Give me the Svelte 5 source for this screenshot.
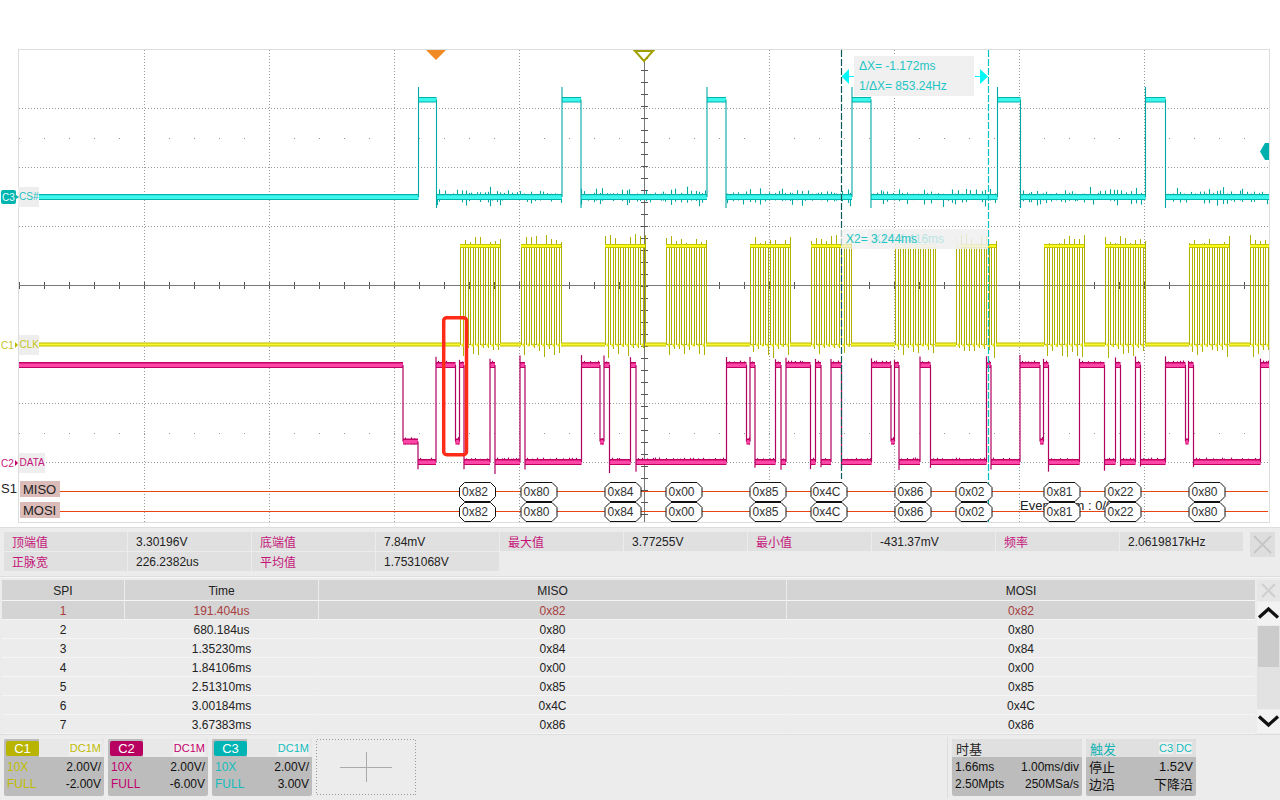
<script>
// seeded random so the noise is the same on every load
let seed = 17
function rnd() {
    seed = (seed * 16807) % 2147483647
    return seed / 2147483647
}

const LEFT = 19
const RIGHT = 1269

const vGrid = [144, 269, 394, 519, 769, 894, 1019, 1144]
const hGrid = [108, 167, 226, 344, 403, 462]
const xTicks = []
for (let x = 19; x < RIGHT; x += 25) xTicks.push(x)
const yTicks = []
for (let y = 58; y < 522; y += 12) yTicks.push(y)

// CS# channel, [rise, fall]
const csPulses = [[418.5, 436.5], [562, 581], [707, 726], [852, 871], [997.5, 1020.5], [1145.5, 1165.5]]
const CS_HI = 99.5
const CS_LO = 197

const csLow = []
const csHigh = []
const csEdges = []
const csNoise = []
let prev = LEFT
for (const [r, f] of csPulses) {
    csLow.push([prev, r])
    csHigh.push([r, f])
    csEdges.push([r, 87, CS_LO], [f, CS_HI, 208])
    prev = f
}
csLow.push([prev, RIGHT])
for (let x = 437; x < RIGHT; x += 2 + rnd() * 4) {
    if (csPulses.some(([r, f]) => x > r && x < f)) continue
    const a = 1 + rnd() * rnd() * 8
    csNoise.push([Math.round(x) + 0.5, CS_LO - 2 - a, CS_LO + 2 + rnd() * rnd() * 9])
}

// CLK channel, start of each 8 clock burst
const bursts = [460, 521, 605, 666, 750, 811, 895, 956, 1044, 1105, 1189, 1250]
const CLK_HI = 246
const CLK_LO = 344.5
const clkLines = []
const clkBits = []
for (const b of bursts) {
    for (let j = 0; j <= 16; j++) {
        const x = Math.round(b + j * 2.5) + 0.5
        const rising = j % 2 == 0
        clkLines.push([x, rising ? 234 + rnd() * 11 : CLK_HI, rising ? CLK_LO : 346 + rnd() * 12])
        if (!rising) clkBits.push(x)
    }
}
const clkLow = []
prev = LEFT
for (const b of bursts) {
    clkLow.push([prev, b])
    prev = b + 40
}

// DATA channel, [x, level it moves to]
const levels = { h: 365, m: 441.5, l: 462 }
const dataEdges = [
    [403, 'm'], [418, 'l'], [436, 'h'], [455.5, 'm'], [459.5, 'h'], [464, 'l'], [490, 'h'], [495, 'l'],
    [520, 'h'], [525, 'l'], [581.5, 'h'], [600, 'm'], [604, 'h'], [609.5, 'l'], [630.5, 'h'], [636, 'l'],
    [726.5, 'h'], [746.5, 'm'], [750, 'h'], [755, 'l'], [775.5, 'h'], [781, 'l'], [786, 'h'], [810.5, 'l'],
    [815.5, 'h'], [821, 'l'], [831, 'h'], [841.5, 'l'], [871.5, 'h'], [891, 'm'], [894.5, 'h'], [899, 'l'],
    [920, 'h'], [930.5, 'l'], [986.5, 'h'], [991, 'l'], [1020, 'h'], [1040, 'm'], [1043.5, 'h'], [1048.5, 'l'],
    [1079.5, 'h'], [1104.5, 'l'], [1115.5, 'h'], [1120.5, 'l'], [1135.5, 'h'], [1140.5, 'l'], [1165.5, 'h'],
    [1185.5, 'm'], [1188.5, 'h'], [1193.5, 'l'], [1260.5, 'h']
]
const dataSegs = []
const dataLines = []
const dataNoise = []
let lvl = 'h'
prev = LEFT
for (const [x, to] of dataEdges) {
    dataSegs.push([prev, x, levels[lvl]])
    const up = levels[to] < levels[lvl]
    let top = Math.min(levels[to], levels[lvl])
    let bottom = Math.max(levels[to], levels[lvl])
    if (up) top -= 4 + rnd() * 6
    else if (to == 'l') bottom += 4 + rnd() * 9
    dataLines.push([x, top, bottom])
    prev = x
    lvl = to
}
dataSegs.push([prev, RIGHT, levels[lvl]])
for (const [a, b, y] of dataSegs) {
    if (a < 403) continue
    for (let x = a + 2; x < b - 1; x += 2 + rnd() * 5) {
        dataNoise.push([Math.round(x) + 0.5, y - 3 - rnd() * 1.5, y + 3])
    }
}

// decoded SPI bytes
const frames = [
    [459.5, '0x82'], [521, '0x80'], [605, '0x84'], [666, '0x00'], [750, '0x85'], [811, '0x4C'],
    [895, '0x86'], [956, '0x02'], [1044, '0x81'], [1105, '0x22'], [1189, '0x80']
]
function pill(x, y) {
    const w = 36, h = 19, c = 5
    return `${x + c},${y} ${x + w - c},${y} ${x + w},${y + c} ${x + w},${y + h - c} ${x + w - c},${y + h} ${x + c},${y + h} ${x},${y + h - c} ${x},${y + c}`
}

const measures = [
    ['顶端值', '3.30196V'], ['底端值', '7.84mV'], ['最大值', '3.77255V'], ['最小值', '-431.37mV'], ['频率', '2.0619817kHz'],
    ['正脉宽', '226.2382us'], ['平均值', '1.7531068V']
]

const rows = [
    ['1', '191.404us', '0x82'],
    ['2', '680.184us', '0x80'],
    ['3', '1.35230ms', '0x84'],
    ['4', '1.84106ms', '0x00'],
    ['5', '2.51310ms', '0x85'],
    ['6', '3.00184ms', '0x4C'],
    ['7', '3.67383ms', '0x86']
]

const channels = [
    { name: 'C1', cls: 'c1', offset: '-2.00V' },
    { name: 'C2', cls: 'c2', offset: '-6.00V' },
    { name: 'C3', cls: 'c3', offset: '3.00V' }
]
</script>

<div class="page">
    <svg class="scope" width="1280" height="527" viewBox="0 0 1280 527">
        <defs>
            <clipPath id="area"><rect x="19" y="50" width="1250" height="472" /></clipPath>
        </defs>
        <rect x="18.5" y="49.5" width="1251" height="473" fill="#fff" stroke="#ddd" />

        <g class="crisp">
            {#each vGrid as x}
                <line class="dot" x1={x + 0.5} x2={x + 0.5} y1="50" y2="522" />
            {/each}
            {#each hGrid as y}
                <line class="dot" x1="19" x2="1269" y1={y + 0.5} y2={y + 0.5} />
            {/each}
            {#each xTicks as x}
                <rect x={x} y="138" width="1" height="1" fill="#999" />
                <rect x={x} y="433" width="1" height="1" fill="#999" />
                <line class="tick" x1={x + 0.5} x2={x + 0.5} y1="282" y2="289" />
            {/each}
            <line class="axis" x1="19" x2="1269" y1="285.5" y2="285.5" />
            <line class="axis" x1="644.5" x2="644.5" y1="50" y2="522" />
            {#each yTicks as y}
                <line class="tick" x1="641" x2="648" y1={y + 0.5} y2={y + 0.5} />
            {/each}
        </g>

        <g clip-path="url(#area)">
            <!-- CLK -->
            {#each clkLines as [x, a, b]}
                <line class="clk" x1={x} x2={x} y1={a} y2={b} />
            {/each}
            {#each bursts as b}
                <rect x={b} y={CLK_HI - 2} width="40" height="4" fill="#c4c400" />
                <rect x={b} y={CLK_HI - 1} width="40" height="2" fill="#fbfb1e" />
            {/each}
            {#each clkBits as x}
                <rect x={x - 2} y={CLK_LO - 1} width="2" height="3" fill="#e8e810" />
            {/each}
            {#each clkLow as [a, b]}
                <rect x={a} y={CLK_LO - 2} width={b - a} height="4" fill="#bcbc00" />
                <rect x={a} y={CLK_LO - 1} width={b - a} height="2" fill="#f8f830" />
            {/each}

            <!-- DATA -->
            {#each dataNoise as [x, a, b]}
                <line class="data" x1={x} x2={x} y1={a} y2={b} />
            {/each}
            {#each dataSegs as [a, b, y]}
                <rect x={a} y={y - 3} width={b - a} height="6" fill="#c00062" />
                <rect x={a} y={y - 1.5} width={b - a} height="3.5" fill="#ff47a8" />
            {/each}
            {#each dataLines as [x, a, b]}
                <line class="data" x1={x} x2={x} y1={a} y2={b} />
            {/each}

            <!-- CS# -->
            {#each csNoise as [x, a, b]}
                <line class="cs" x1={x} x2={x} y1={a} y2={b} />
            {/each}
            {#each csLow as [a, b]}
                <rect x={a} y={CS_LO - 3} width={b - a} height="6" fill="#00b2ae" />
                <rect x={a} y={CS_LO - 1.8} width={b - a} height="3.8" fill="#3cf8ec" />
            {/each}
            {#each csHigh as [a, b]}
                <rect x={a} y={CS_HI - 2.5} width={b - a} height="5.5" fill="#00b2ae" />
                <rect x={a} y={CS_HI - 1.5} width={b - a} height="3.5" fill="#3cf8ec" />
            {/each}
            {#each csEdges as [x, a, b]}
                <line class="cs" x1={x} x2={x} y1={a} y2={b} />
            {/each}

            <!-- cursors -->
            <line class="cursor one" x1="841.5" x2="841.5" y1="50" y2="479" />
            <line class="cursor two" x1="988.5" x2="988.5" y1="50" y2="522" />
        </g>

        <!-- measurement boxes -->
        <rect x="854" y="56" width="120" height="40" fill="#f0f0f0" />
        <text class="cur" x="859" y="70">ΔX= -1.172ms</text>
        <text class="cur" x="859" y="90">1/ΔX= 853.24Hz</text>
        <polygon points="841.5,76.5 849,69 849,76 854,76 854,77 849,77 849,84" fill="#00f8f8" />
        <polygon points="988,76.5 980,69 980,76 975,76 975,77 980,77 980,84" fill="#00f8f8" />

        <rect x="868" y="229" width="120" height="20" fill="#f0f0f0" fill-opacity="0.85" />
        <text class="cur" x="873" y="243">X1= 4.416ms</text>
        <rect x="841" y="229" width="120" height="20" fill="#f0f0f0" fill-opacity="0.72" />
        <text class="cur" x="846" y="243">X2= 3.244ms</text>

        <!-- triggers -->
        <polygon points="426,50 446,50 436,60" fill="#f08a24" />
        <polygon points="635,51 653,51 644,61" fill="#fff" stroke="#a0a000" stroke-width="2" />
        <polygon points="1260,151.5 1265,143 1269,143 1269,160 1265,160" fill="#00b0ac" />

        <!-- channel labels -->
        <rect x="18" y="187" width="21" height="20" fill="#eee" />
        <text class="small cs-text" x="19" y="200">CS#</text>
        <rect x="1" y="190" width="15" height="14" rx="2" fill="#00b4b0" />
        <polygon points="16,195 19,197 16,199" fill="#00b4b0" />
        <text class="small badge" x="8.5" y="201">C3</text>

        <rect x="19" y="335" width="20" height="20" fill="#eee" />
        <text class="small clk-text" x="19.5" y="348">CLK</text>
        <text class="small clk-text" x="1" y="349">C1</text>
        <polygon points="15,342 18,345 15,348" fill="#b8b800" />

        <rect x="19" y="453" width="26" height="20" fill="#eee" />
        <text class="small data-text" x="19.5" y="466">DATA</text>
        <text class="small data-text" x="1" y="467">C2</text>
        <polygon points="15,460 18,463 15,466" fill="#c00062" />

        <text class="bus" x="1" y="493">S1</text>
        <line class="busline" x1="60" x2="1268" y1="491.5" y2="491.5" />
        <line class="busline" x1="60" x2="1268" y1="511.5" y2="511.5" />
        <rect x="20" y="481" width="40" height="16" fill="#dcbcb8" />
        <rect x="20" y="502" width="40" height="16" fill="#dcbcb8" />
        <text class="bus" x="23" y="494">MISO</text>
        <text class="bus" x="23" y="515">MOSI</text>

        <text class="bus" x="1020" y="510">Event Num : 0/0</text>

        {#each frames as [x, label]}
            <polygon class="pill" points={pill(x, 482.5)} />
            <text class="hex" x={x + 15.5} y="496">{label}</text>
            <polygon class="pill" points={pill(x, 502.5)} />
            <text class="hex" x={x + 15.5} y="516">{label}</text>
        {/each}

        <rect x="443.7" y="317.7" width="22.8" height="137" rx="3" fill="none" stroke="#ff2a18" stroke-width="3.5" />
    </svg>

    <div class="measures">
        <div class="meas-grid">
            {#each measures as [label, value]}
                <div class="meas-label">{label}</div>
                <div class="meas-value">{value}</div>
            {/each}
        </div>
        <div class="close big">
            <svg width="25" height="25" viewBox="0 0 25 25"><path d="M4 4 L21 21 M21 4 L4 21" stroke="#c6c6c6" stroke-width="2" /></svg>
        </div>
    </div>

    <div class="decode">
        <div class="table">
            <div class="row head">
                <div>SPI</div><div>Time</div><div>MISO</div><div>MOSI</div>
            </div>
            {#each rows as [n, time, byte], i}
                <div class="row" class:selected={i == 0}>
                    <div>{n}</div><div>{time}</div><div>{byte}</div><div>{byte}</div>
                </div>
            {/each}
        </div>
        <div class="scroll">
            <div class="close small-x">
                <svg width="23" height="21" viewBox="0 0 23 21"><path d="M5 4 L18 17 M18 4 L5 17" stroke="#cfcfcf" stroke-width="2" /></svg>
            </div>
            <div class="arrow">
                <svg width="23" height="23" viewBox="0 0 23 23"><path d="M2 15.5 L11.5 7 L21 15.5" fill="none" stroke="#111" stroke-width="3.2" /></svg>
            </div>
            <div class="track"><div class="thumb"></div></div>
            <div class="arrow">
                <svg width="23" height="23" viewBox="0 0 23 23"><path d="M2 6.5 L11.5 15 L21 6.5" fill="none" stroke="#111" stroke-width="3.2" /></svg>
            </div>
        </div>
    </div>

    <div class="bottom">
        {#each channels as ch}
            <div class="chan {ch.cls}">
                <div class="chan-head">
                    <div class="chan-tab"><span class="chan-name">{ch.name}</span></div>
                    <span class="coupling">DC1M</span>
                </div>
                <div class="line"><span class="tint">10X</span><span>2.00V/</span></div>
                <div class="line"><span class="tint">FULL</span><span>{ch.offset}</span></div>
            </div>
        {/each}
        <div class="crosshair">
            <svg width="100" height="56" viewBox="0 0 100 56">
                <rect class="dotbox" x="0.5" y="0.5" width="99" height="55" />
                <line class="hair" x1="24" x2="76" y1="28.5" y2="28.5" />
                <line class="hair" x1="50.5" x2="50.5" y1="13" y2="43" />
            </svg>
        </div>
        <div class="spacer"></div>
        <div class="info timebase">
            <div class="info-head">时基</div>
            <div class="line"><span>1.66ms</span><span>1.00ms/div</span></div>
            <div class="line"><span>2.50Mpts</span><span>250MSa/s</span></div>
        </div>
        <div class="info trigger">
            <div class="info-head">
                <span class="trig-title">触发</span>
                <span class="chips"><span>C3</span><span>DC</span></span>
            </div>
            <div class="line cjk"><span>停止</span><span>1.52V</span></div>
            <div class="line cjk"><span>边沿</span><span>下降沿</span></div>
        </div>
    </div>
</div>

<style>
    :global(body) {
        background: #fff;
    }
    .page {
        display: flex;
        flex-direction: column;
        width: 1280px;
        height: 800px;
        overflow: hidden;
        font-family: "Liberation Sans", "Noto Sans CJK SC", sans-serif;
        font-size: 12px;
        color: #222;
        background: #ececec;
    }
    .scope {
        display: block;
        flex: none;
        background: #fff;
    }
    .crisp line {
        shape-rendering: crispEdges;
    }
    .dot {
        stroke: #999;
        stroke-width: 1;
        stroke-dasharray: 1 2;
    }
    .axis {
        stroke: #777;
        stroke-width: 1;
    }
    .tick {
        stroke: #555;
        stroke-width: 1;
    }
    .clk {
        stroke: #b0b000;
        stroke-width: 1;
        shape-rendering: crispEdges;
    }
    .data {
        stroke: #b00060;
        stroke-width: 1.2;
    }
    .cs {
        stroke: #00a8a4;
        stroke-width: 1.1;
    }
    .cursor {
        stroke-width: 1.2;
        stroke-dasharray: 7 2;
    }
    .cursor.one {
        stroke: #0e5a5a;
    }
    .cursor.two {
        stroke: #00c0c0;
    }
    text {
        font-family: "Liberation Sans", "Noto Sans CJK SC", sans-serif;
    }
    .cur {
        font-size: 12px;
        fill: #1fc4c4;
    }
    .small {
        font-size: 10px;
    }
    .cs-text {
        fill: #22c0c0;
    }
    .clk-text {
        fill: #c4c41a;
    }
    .data-text {
        fill: #c4167a;
    }
    .small.badge {
        fill: #e8ffff;
        text-anchor: middle;
    }
    .bus {
        font-size: 13px;
        fill: #222;
    }
    .busline {
        stroke: #e84410;
        stroke-width: 1;
        shape-rendering: crispEdges;
    }
    .pill {
        fill: #fff;
        stroke: #111;
        stroke-width: 1;
    }
    .hex {
        font-size: 12px;
        fill: #333;
        text-anchor: middle;
    }

    .measures {
        display: flex;
        flex: none;
        align-items: flex-start;
        height: 50px;
        padding: 4px 5px 0 4px;
        box-sizing: border-box;
        border-top: 1px solid #ddd;
        border-bottom: 1px solid #ddd;
    }
    .meas-grid {
        display: grid;
        grid-template-columns: repeat(10, 123px);
        grid-auto-rows: 19px;
        gap: 1px;
    }
    .meas-label,
    .meas-value {
        display: flex;
        align-items: center;
        padding-left: 8px;
        background: #e0e0e0;
    }
    .meas-label {
        color: #c4167a;
    }
    .close {
        display: flex;
        flex: none;
        align-items: center;
        justify-content: center;
        background: #dedede;
    }
    .big {
        width: 25px;
        height: 25px;
        margin-left: 7px;
    }
    .decode {
        display: flex;
        flex: none;
        height: 158px;
        padding: 2px 0 1px 2px;
        box-sizing: border-box;
        border-top: 1px solid #f6f6f6;
        border-bottom: 1px solid #ddd;
    }
    .table {
        width: 1254px;
    }
    .row {
        display: grid;
        grid-template-columns: 122px 193px 467px 468px;
        column-gap: 1px;
        height: 19px;
    }
    .row > div {
        display: flex;
        align-items: center;
        justify-content: center;
        padding-top: 1px;
        background: #ececec;
        border-bottom: 1px solid #f5f5f5;
    }
    .row.head {
        height: 21px;
    }
    .row.head > div,
    .row.selected > div {
        background: #d4d4d4;
    }
    .row.selected > div {
        color: #a84040;
    }
    .scroll {
        display: flex;
        flex-direction: column;
        width: 23px;
        margin-left: 1px;
        gap: 1px;
    }
    .small-x {
        height: 21px;
        background: #e6e6e6;
    }
    .arrow {
        display: flex;
        align-items: center;
        justify-content: center;
        height: 23px;
        background: #f2f2f2;
    }
    .track {
        flex: 1;
        padding: 0 1px;
        background: #e2e2e2;
    }
    .thumb {
        height: 41px;
        background: #cbcbcb;
    }
    .bottom {
        display: flex;
        flex: 1;
        gap: 4px;
        padding: 4px 84px 4px 4px;
        box-sizing: border-box;
    }
    .chan,
    .info {
        display: flex;
        flex-direction: column;
        background: #bcbcbc;
        border-radius: 2px;
        overflow: hidden;
    }
    .chan {
        width: 100px;
    }
    .chan-head {
        display: flex;
        align-items: stretch;
        justify-content: space-between;
        height: 18px;
        margin-bottom: 1px;
        background: #e8e8e8;
    }
    .chan-tab {
        display: flex;
        width: 35px;
        padding: 2px 0 1px 2px;
        box-sizing: border-box;
        background: #bcbcbc;
    }
    .chan-name {
        flex: 1;
        border-radius: 2px;
        color: #fff;
        font-size: 13px;
        line-height: 15px;
        text-align: center;
    }
    .coupling {
        margin: 2px 3px 1px 0;
        padding-left: 1px;
        font-size: 11px;
        line-height: 15px;
        background: #f0f0f0;
    }
    .line {
        display: flex;
        align-items: center;
        justify-content: space-between;
        height: 17px;
        padding: 0 3px;
        color: #111;
    }
    .c1 .chan-name { background: #b8b400; }
    .c2 .chan-name { background: #b80060; }
    .c3 .chan-name { background: #00b4b4; }
    .c1 .tint, .c1 .coupling { color: #c0bc00; }
    .c2 .tint, .c2 .coupling { color: #c4006c; }
    .c3 .tint, .c3 .coupling { color: #14bcbc; }
    .crosshair {
        width: 100px;
        height: 56px;
    }
    .dotbox {
        fill: none;
        stroke: #999;
        stroke-dasharray: 1 2;
        shape-rendering: crispEdges;
    }
    .hair {
        stroke: #aaa;
        shape-rendering: crispEdges;
    }
    .spacer {
        flex: 1;
        border-right: 1px solid #ddd;
        margin: -2px 0;
    }
    .timebase {
        width: 130px;
    }
    .trigger {
        width: 110px;
    }
    .info-head {
        display: flex;
        align-items: center;
        justify-content: space-between;
        height: 18px;
        margin-bottom: 1px;
        padding: 0 4px;
        font-size: 13px;
        background: #e0e0e0;
    }
    .info .cjk {
        font-size: 13px;
    }
    .trig-title {
        color: #14b4b4;
    }
    .chips {
        display: flex;
        gap: 3px;
        font-size: 11px;
        color: #14bcbc;
    }
    .chips span {
        background: #f0f0f0;
    }
</style>
